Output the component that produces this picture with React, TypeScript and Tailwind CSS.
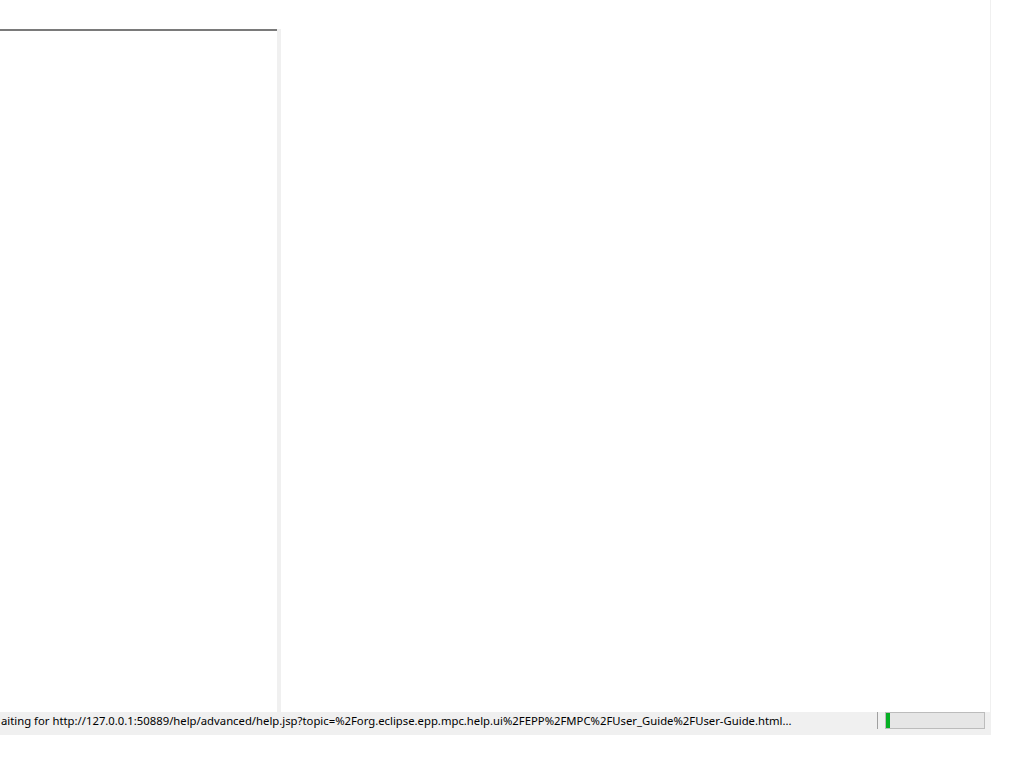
import React from 'react';

const STATUS_TEXT =
  'aiting for http://127.0.0.1:50889/help/advanced/help.jsp?topic=%2Forg.eclipse.epp.mpc.help.ui%2FEPP%2FMPC%2FUser_Guide%2FUser-Guide.html...';

const App: React.FC = () => {
  return (
    <div className="w-[1024px] h-[768px] bg-white overflow-hidden flex flex-col">
      {/* Main window area */}
      <div className="w-[991px] h-[712px] flex">
        <div className="w-[990px] flex flex-col">
          <div className="h-[29px] shrink-0" />
          <div className="flex-1 flex">
            {/* Left pane (toc) */}
            <div className="w-[277px] border-t-2 border-t-[#7a7a7a] bg-white" />
            {/* Splitter */}
            <div className="w-[4px] bg-[#f0f0f0]" />
            {/* Content pane */}
            <div className="flex-1 bg-white" />
          </div>
        </div>
        <div className="w-px bg-[#f0f0f0]" />
      </div>

      {/* Status bar */}
      <div className="w-[991px] h-[23px] bg-[#f0f0f0] flex items-start">
        <div
          className="w-[877px] h-[17px] overflow-hidden whitespace-nowrap text-[11.3px] leading-[18px] text-black pl-[1px]"
          style={{ fontFamily: '"Noto Sans", "Open Sans", sans-serif' }}
        >
          {STATUS_TEXT}
        </div>
        <div className="w-px h-[17px] bg-[#a0a0a0]" />
        <div className="ml-[7px] w-[100px] h-[17px] border border-[#bcbcbc] bg-[#e6e6e6] flex">
          <div className="w-[4px] bg-[#06b025]" />
        </div>
      </div>
    </div>
  );
};

export default App;
